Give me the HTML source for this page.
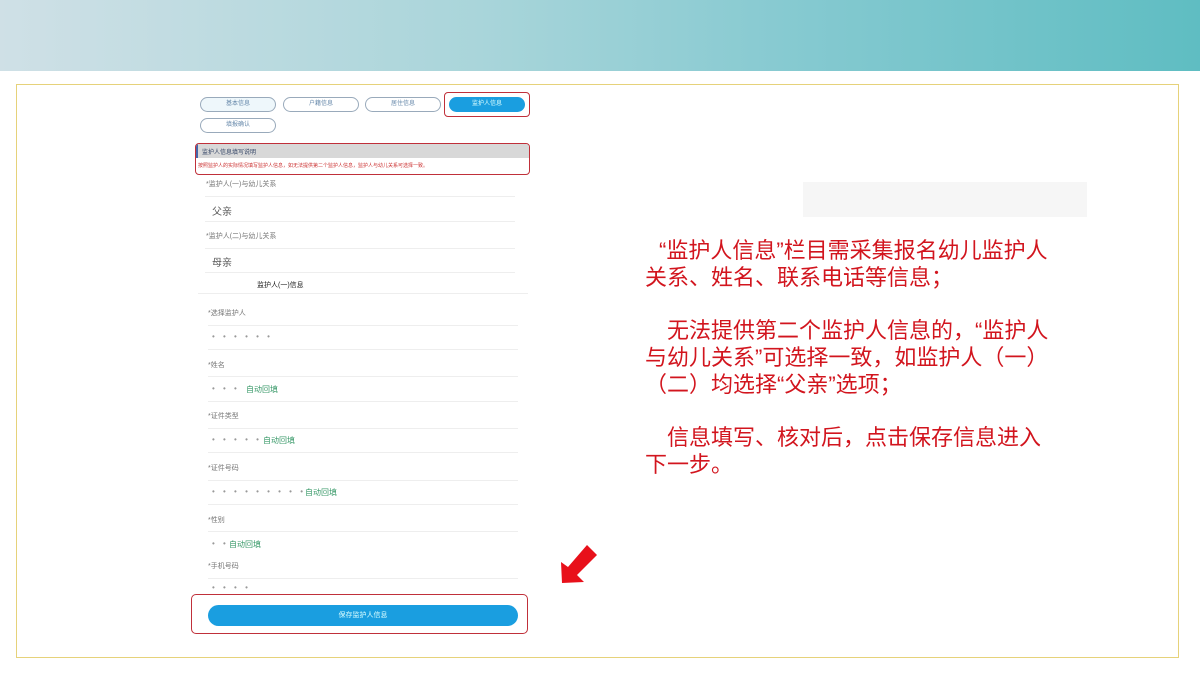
<!DOCTYPE html>
<html><head><meta charset="utf-8"><style>
*{margin:0;padding:0;box-sizing:border-box}
body{width:1200px;height:675px;background:#fff;position:relative;overflow:hidden;font-family:"Liberation Sans","Noto Sans CJK SC",sans-serif}
.hdr{position:absolute;left:0;top:0;width:1200px;height:71px;background:linear-gradient(90deg,#cfe0e6 0%,#a9d5da 40%,#87cad1 65%,#5fbdc2 100%)}
.frame{position:absolute;left:16px;top:84px;width:1163px;height:574px;border:1.5px solid #e6d27a}
.a{position:absolute}
.pill{position:absolute;height:15px;border:1px solid #9ab;border-radius:8px;font-size:6px;color:#68a;text-align:center;line-height:13px;background:#eef7fb}
.lbl{position:absolute;font-size:7px;color:#777}
.ln{position:absolute;height:1px;background:#eee}
.g{position:absolute;font-size:8px;color:#3a9a6a}
.dots{position:absolute;font-size:8px;color:#999;letter-spacing:3px}
.txt{position:absolute;left:645px;top:238px;width:460px;font-size:22px;line-height:26.7px;color:#d2151e;font-family:"Liberation Sans","Noto Sans CJK SC",sans-serif;white-space:nowrap}
</style></head><body>
<div class="hdr"></div>
<div class="frame"></div>
<div class="pill" style="left:200px;top:97px;width:76px">基本信息</div>
<div class="pill" style="left:283px;top:97px;width:76px;background:#fff">户籍信息</div>
<div class="pill" style="left:365px;top:97px;width:76px;background:#fff">居住信息</div>
<div class="a" style="left:444px;top:92px;width:86px;height:25px;border:1.5px solid #c0303a;border-radius:4px"></div>
<div class="pill" style="left:449px;top:97px;width:76px;background:#1a9ee0;border-color:#1a9ee0;color:#dff">监护人信息</div>
<div class="pill" style="left:200px;top:118px;width:76px;background:#fff">填报确认</div>
<div class="a" style="left:195px;top:143px;width:335px;height:32px;border:1.5px solid #c0303a;border-radius:4px;overflow:hidden">
<div style="height:14px;background:#d8d8d8;font-size:6px;color:#346;padding:3px 4px;border-left:2px solid #46a">监护人信息填写说明</div>
<div style="font-size:5px;color:#c33;padding:4px 2px;white-space:nowrap">按照监护人的实际情况填写监护人信息，如无法提供第二个监护人信息，监护人与幼儿关系可选择一致。</div></div>
<div class="lbl" style="left:206px;top:179px">*监护人(一)与幼儿关系</div>
<div class="ln" style="left:205px;top:196px;width:310px"></div>
<div class="a" style="left:212px;top:203px;font-size:10px;color:#555">父亲</div>
<div class="ln" style="left:205px;top:221px;width:310px"></div>
<div class="lbl" style="left:206px;top:231px">*监护人(二)与幼儿关系</div>
<div class="ln" style="left:205px;top:248px;width:310px"></div>
<div class="a" style="left:212px;top:254px;font-size:10px;color:#555">母亲</div>
<div class="ln" style="left:205px;top:272px;width:310px"></div>
<div class="a" style="left:257px;top:280px;font-size:7px;color:#222">监护人(一)信息</div>
<div class="ln" style="left:198px;top:293px;width:330px"></div>
<div class="lbl" style="left:208px;top:308px">*选择监护人</div>
<div class="ln" style="left:208px;top:325px;width:310px"></div>
<div class="dots" style="left:212px;top:332px">• • • • • •</div>
<div class="ln" style="left:208px;top:349px;width:310px"></div>
<div class="lbl" style="left:208px;top:360px">*姓名</div>
<div class="ln" style="left:208px;top:376px;width:310px"></div>
<div class="dots" style="left:212px;top:384px">• • •</div><div class="g" style="left:246px;top:384px">自动回填</div>
<div class="ln" style="left:208px;top:401px;width:310px"></div>
<div class="lbl" style="left:208px;top:411px">*证件类型</div>
<div class="ln" style="left:208px;top:428px;width:310px"></div>
<div class="dots" style="left:212px;top:435px">• • • • •</div><div class="g" style="left:263px;top:435px">自动回填</div>
<div class="ln" style="left:208px;top:452px;width:310px"></div>
<div class="lbl" style="left:208px;top:463px">*证件号码</div>
<div class="ln" style="left:208px;top:480px;width:310px"></div>
<div class="dots" style="left:212px;top:487px">• • • • • • • • •</div><div class="g" style="left:305px;top:487px">自动回填</div>
<div class="ln" style="left:208px;top:504px;width:310px"></div>
<div class="lbl" style="left:208px;top:515px">*性别</div>
<div class="ln" style="left:208px;top:531px;width:310px"></div>
<div class="dots" style="left:212px;top:539px">• •</div><div class="g" style="left:229px;top:539px">自动回填</div>
<div class="lbl" style="left:208px;top:561px">*手机号码</div>
<div class="ln" style="left:208px;top:578px;width:310px"></div>
<div class="dots" style="left:212px;top:583px">• • • •</div>
<div class="a" style="left:191px;top:594px;width:337px;height:40px;border:1.5px solid #c0303a;border-radius:5px"></div>
<div class="a" style="left:208px;top:605px;width:310px;height:21px;background:#1a9ee0;border-radius:11px;font-size:7px;color:#dff;text-align:center;line-height:21px">保存监护人信息</div>
<div class="a" style="left:803px;top:182px;width:284px;height:35px;background:#f6f6f6"></div>
<svg class="a" style="left:0;top:0" width="1200" height="675"><polygon points="561,562 562,583 584,582 577,575 597,555 587,545 568,567" fill="#e8101a"/></svg>
<div class="txt"><span style="padding-left:14px">“监护人信息”栏目需采集报名幼儿监护人</span><br>关系、姓名、联系电话等信息；<br><br><span style="padding-left:22px">无法提供第二个监护人信息的，“监护人</span><br>与幼儿关系”可选择一致，如监护人（一）<br>（二）均选择“父亲”选项；<br><br><span style="padding-left:22px">信息填写、核对后，点击保存信息进入</span><br>下一步。</div>
</body></html>
